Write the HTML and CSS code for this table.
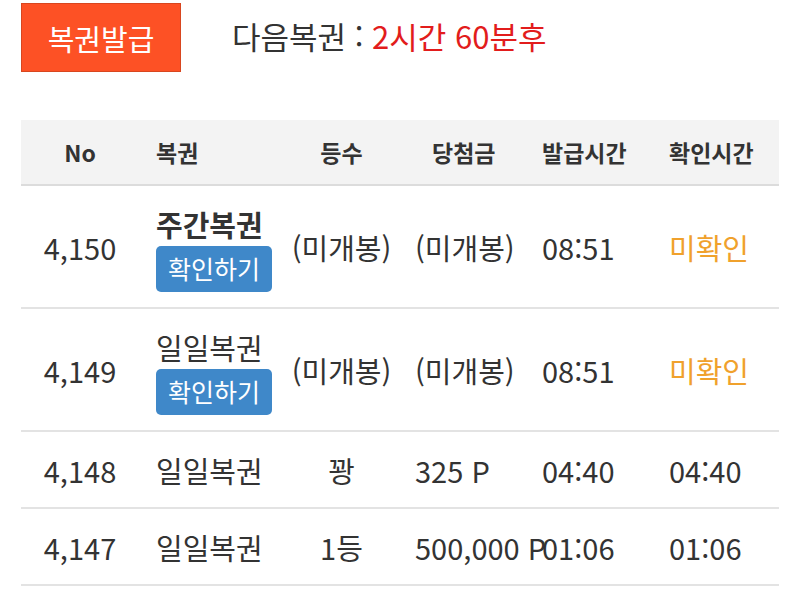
FILE: index.html
```html
<!DOCTYPE html>
<html lang="ko">
<head>
<meta charset="utf-8">
<link rel="stylesheet" href="styles.css">
</head>
<body>
<div class="top">
  <button class="issue">복권발급</button>
  <div class="next">다음복권 : <span class="remain">2시간 60분후</span></div>
</div>
<div class="table">
  <div class="row head">
    <div class="c1">No</div>
    <div class="c2">복권</div>
    <div class="c3">등수</div>
    <div class="c4 h4">당첨금</div>
    <div class="c5">발급시간</div>
    <div class="c6">확인시간</div>
  </div>
  <div class="row tall">
    <div class="c1">4,150</div>
    <div class="c2 stack"><span class="name bold">주간복권</span><span class="check">확인하기</span></div>
    <div class="c3">(미개봉)</div>
    <div class="c4">(미개봉)</div>
    <div class="c5">08:51</div>
    <div class="c6 pending">미확인</div>
  </div>
  <div class="row tall">
    <div class="c1">4,149</div>
    <div class="c2 stack"><span class="name">일일복권</span><span class="check">확인하기</span></div>
    <div class="c3">(미개봉)</div>
    <div class="c4">(미개봉)</div>
    <div class="c5">08:51</div>
    <div class="c6 pending">미확인</div>
  </div>
  <div class="row short">
    <div class="c1">4,148</div>
    <div class="c2">일일복권</div>
    <div class="c3">꽝</div>
    <div class="c4">325 P</div>
    <div class="c5">04:40</div>
    <div class="c6">04:40</div>
  </div>
  <div class="row short">
    <div class="c1">4,147</div>
    <div class="c2">일일복권</div>
    <div class="c3">1등</div>
    <div class="c4">500,000 P</div>
    <div class="c5">01:06</div>
    <div class="c6">01:06</div>
  </div>
</div>
</body>
</html>
```

FILE: styles.css
```css
* { box-sizing: border-box; }
body {
  margin: 0;
  padding: 3px 21px 0 21px;
  background: #fff;
  font-family: "Noto Sans CJK KR", "Noto Sans", sans-serif;
  color: #333;
}
.top {
  display: flex;
  align-items: center;
  height: 69px;
}
.issue {
  width: 160px;
  height: 69px;
  background: #fd5125;
  border: 1px solid #d8461f;
  color: #fff;
  font-family: inherit;
  font-size: 29px;
  padding: 0;
  margin: 0;
}
.next {
  margin-left: 51px;
  font-size: 31px;
  color: #333;
  margin-top: -4px;
}
.remain { color: #e21c1c; }
.table {
  margin-top: 48px;
  width: 758px;
}
.row {
  display: grid;
  grid-template-columns: 118px 144px 114px 138px 125px 119px;
  align-items: center;
  border-bottom: 2px solid #e3e3e3;
  font-size: 29px;
  white-space: nowrap;
}
.row > div { overflow: visible; }
.head {
  height: 66px;
  background: #f3f3f3;
  border-bottom: 2px solid #dcdcdc;
  font-size: 23px;
  font-weight: bold;
}
.tall { height: 123px; }
.short { height: 77px; }
.c1 { text-align: center; }
.c2 { padding-left: 17px; }
.c3 { text-align: center; padding-left: 3px; }
.c4 { padding-left: 18px; }
.head .h4 { padding-left: 35px; }
.c5 { padding-left: 7px; }
.c6 { padding-left: 9px; }
.head .c5 { padding-left: 7px; }
.head .c6 { padding-left: 9px; }
.stack {
  display: flex;
  flex-direction: column;
  align-items: flex-start;
  gap: 2px;
  margin-top: 2px;
}
.name { line-height: 40px; }
.bold { font-weight: bold; }
.check {
  display: inline-block;
  width: 116px;
  height: 46px;
  line-height: 44px;
  text-align: center;
  background: #3f88c9;
  color: #fff;
  border-radius: 5px;
  font-size: 25px;
}
.pending { color: #f0a12c; }
```
